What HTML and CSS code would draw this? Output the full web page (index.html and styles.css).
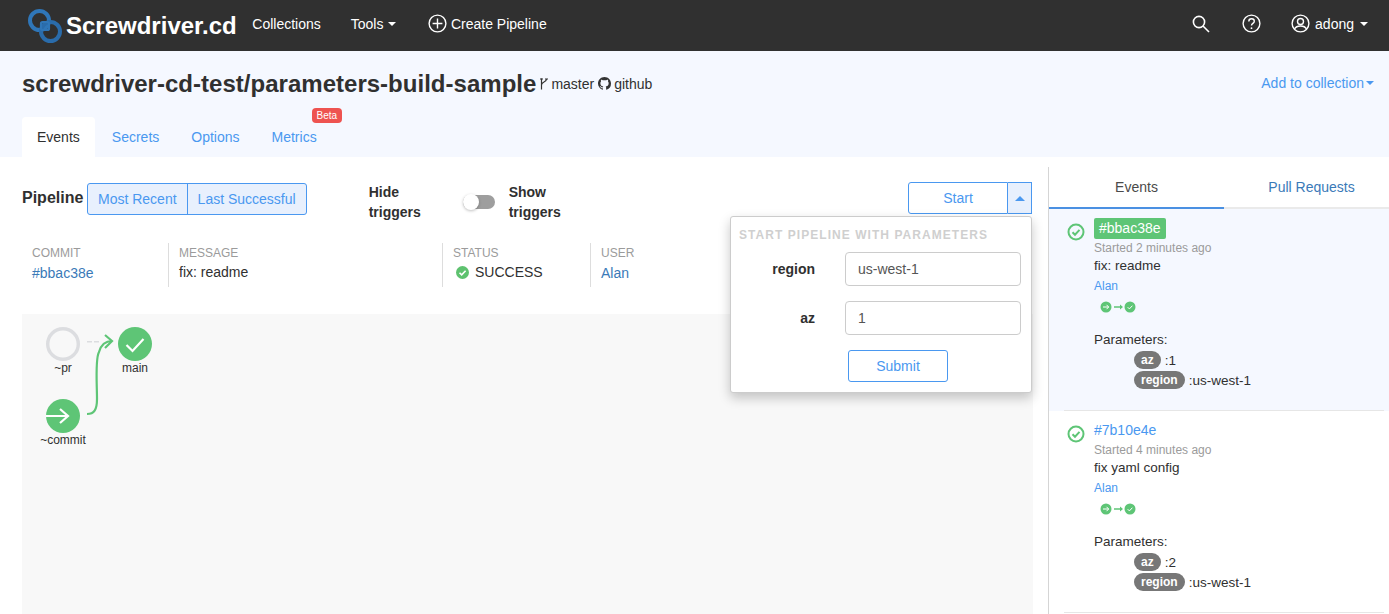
FILE: index.html
```html
<!DOCTYPE html>
<html lang="en">
<head>
<meta charset="utf-8">
<title>Screwdriver.cd</title>
<link rel="stylesheet" href="styles.css">
</head>
<body>
<header class="topbar">
  <a class="brand">
    <svg class="brand-logo" width="34" height="34" viewBox="0 0 34 34" fill="none">
      <circle cx="11.500" cy="11.500" r="9.500" stroke="#2f76b8" stroke-width="4"/>
      <circle cx="22.500" cy="22.500" r="9.500" stroke="#2a6cab" stroke-width="4"/>
      <rect x="13" y="13" width="8" height="8" rx="1.500" stroke="#2f76b8" stroke-width="2.200"/>
    </svg>
    <span class="brand-name">Screwdriver.cd</span>
  </a>
  <nav class="nav-main">
    <a class="nav-item">Collections</a>
    <a class="nav-item">Tools <i class="caret"></i></a>
    <a class="nav-item nav-create">
      <svg width="19" height="19" viewBox="0 0 19 19" fill="none" stroke="#fff" stroke-width="1.4"><circle cx="9.5" cy="9.5" r="8.4"/><path d="M9.5 4.6v9.8M4.6 9.5h9.8"/></svg>
      Create Pipeline
    </a>
  </nav>
  <nav class="nav-right">
    <svg class="nav-search" width="18" height="18" viewBox="0 0 18 18" fill="none" stroke="#fff" stroke-width="1.6"><circle cx="7" cy="7" r="5.6"/><path d="M11 11l6 6"/></svg>
    <svg class="nav-help" width="19" height="19" viewBox="0 0 19 19" fill="none" stroke="#fff" stroke-width="1.4"><circle cx="9.5" cy="9.5" r="8.4"/><path d="M6.8 7.4c0-1.6 1.2-2.6 2.8-2.6s2.7 1 2.7 2.4c0 2.200-2.800 2.200-2.800 4.400"/><circle cx="9.500" cy="14.200" r=".9" fill="#fff" stroke="none"/></svg>
    <a class="nav-item nav-user">
      <svg width="19" height="19" viewBox="0 0 19 19" fill="none" stroke="#fff" stroke-width="1.4"><circle cx="9.500" cy="9.500" r="8.400"/><circle cx="9.500" cy="7.500" r="3"/><path d="M3.600 15c1-2.300 3.200-3 5.900-3s4.900.7 5.900 3"/></svg>
      adong <i class="caret"></i>
    </a>
  </nav>
</header>

<section class="pipeline-head">
  <div class="title-row">
    <h1 class="pipeline-title">screwdriver-cd-test/parameters-build-sample</h1>
    <span class="repo-meta">
      <svg class="branch-icon" width="9" height="12" viewBox="0 0 9 12" fill="none" stroke="#333" stroke-width="1.200"><path d="M2.500 0.500v11M7.500 1c0 3.500-5 2.500-5 6"/><path d="M1 1h3M6 1h3"/></svg>
      <span>master</span>
      <svg class="git-icon" width="13" height="13" viewBox="0 0 16 16"><path fill="#333" d="M8 0C3.580 0 0 3.580 0 8c0 3.540 2.290 6.530 5.470 7.590.4.070.55-.17.55-.38 0-.19-.01-.82-.01-1.490-2.010.37-2.530-.49-2.690-.94-.09-.23-.48-.94-.82-1.130-.28-.15-.68-.52-.01-.53.63-.01 1.080.58 1.230.82.720 1.210 1.870.87 2.330.66.070-.52.280-.87.510-1.070-1.780-.2-3.640-.89-3.640-3.950 0-.87.310-1.590.820-2.150-.08-.2-.36-1.020.08-2.120 0 0 .67-.21 2.200.82.640-.18 1.320-.27 2-.27s1.360.09 2 .27c1.530-1.040 2.200-.82 2.200-.82.440 1.100.160 1.920.08 2.120.51.560.82 1.270.82 2.150 0 3.070-1.870 3.750-3.650 3.950.290.250.540.730.540 1.480 0 1.070-.01 1.930-.01 2.200 0 .210.150.460.550.380A8.010 8.010 0 0 0 16 8c0-4.420-3.580-8-8-8z"/></svg>
      <span>github</span>
    </span>
    <a class="add-collection">Add to collection<i class="caret caret-blue"></i></a>
  </div>
  <div class="tabs">
    <a class="tab tab-active">Events</a>
    <a class="tab">Secrets</a>
    <a class="tab">Options</a>
    <a class="tab tab-metrics">Metrics<span class="beta">Beta</span></a>
  </div>
</section>

<main class="content">
  <section class="left">
    <div class="controls">
      <strong class="pipeline-label">Pipeline</strong>
      <div class="btn-group">
        <a class="seg">Most Recent</a>
        <a class="seg">Last Successful</a>
      </div>
      <div class="toggle-block">
        <strong class="toggle-text">Hide<br>triggers</strong>
        <span class="toggle"><i class="toggle-knob"></i></span>
        <strong class="toggle-text">Show<br>triggers</strong>
      </div>
      <div class="start-group">
        <a class="start-btn">Start</a>
        <a class="start-arrow"><i class="caret-up"></i></a>
        <form class="popover">
          <h2 class="popover-title">START PIPELINE WITH PARAMETERS</h2>
          <label class="field"><span class="field-label">region</span><input class="field-input" value="us-west-1"></label>
          <label class="field"><span class="field-label">az</span><input class="field-input" value="1"></label>
          <div class="submit-row"><a class="submit-btn">Submit</a></div>
        </form>
      </div>
    </div>

    <div class="meta">
      <div class="meta-col col-commit"><span class="meta-head">COMMIT</span><a class="meta-link">#bbac38e</a></div>
      <div class="meta-col col-message"><span class="meta-head">MESSAGE</span><span class="meta-val">fix: readme</span></div>
      <div class="meta-col col-status"><span class="meta-head">STATUS</span>
        <span class="meta-val status-val">
          <svg width="13" height="13" viewBox="0 0 13 13"><circle cx="6.500" cy="6.500" r="6.500" fill="#5ec26f"/><path d="M3.500 6.700l2.200 2.200 3.900-4.200" fill="none" stroke="#fff" stroke-width="1.600"/></svg>
          SUCCESS
        </span>
      </div>
      <div class="meta-col col-user"><span class="meta-head">USER</span><a class="meta-link">Alan</a></div>
    </div>

    <div class="graph">
      <svg class="graph-svg" width="160" height="140" viewBox="0 0 160 140">
        <circle cx="41" cy="30" r="15.300" fill="none" stroke="#dcdde0" stroke-width="3.400"/>
        <path d="M65 27.700H77" stroke="#dcdde0" stroke-width="1.500" stroke-dasharray="5 2" fill="none"/>
        <path d="M65 100c7 0 10-4 10-15 0-15-2-40 2-47 2-7 7-11 13-11" fill="none" stroke="#5ec576" stroke-width="2.200"/>
        <path d="M83 21l7 6-7 7" fill="none" stroke="#5ec576" stroke-width="2.200"/>
        <circle cx="113" cy="30" r="17" fill="#5ec576"/>
        <path d="M104.500 31l6 6 11-12" fill="none" stroke="#fff" stroke-width="2.200"/>
        <circle cx="41" cy="102" r="17" fill="#5ec576"/>
        <path d="M24 102h22M38 95l8 7-8 7" fill="none" stroke="#fff" stroke-width="2.200"/>
        <text class="graph-label" x="41" y="58" text-anchor="middle">~pr</text>
        <text class="graph-label" x="113" y="58" text-anchor="middle">main</text>
        <text class="graph-label" x="41" y="130" text-anchor="middle">~commit</text>
      </svg>
    </div>
  </section>

  <aside class="side">
    <div class="side-tabs">
      <a class="side-tab side-tab-active">Events</a>
      <a class="side-tab">Pull Requests</a>
    </div>
    <article class="event event-active">
      <svg class="event-check" width="18" height="18" viewBox="0 0 18 18" fill="none"><circle cx="9" cy="9" r="7.500" stroke="#5ec576" stroke-width="2"/><path d="M5.500 9.200l2.500 2.500 4.500-4.800" stroke="#5ec576" stroke-width="2"/></svg>
      <div class="event-body">
        <a class="sha sha-active">#bbac38e</a>
        <div class="started">Started 2 minutes ago</div>
        <div class="msg">fix: readme</div>
        <a class="author">Alan</a>
        <svg class="mini-graph" width="38" height="12" viewBox="0 0 38 12"><circle cx="6" cy="6" r="5.500" fill="#5ec576"/><path d="M3 6h5.500M6.500 3.800L8.700 6 6.500 8.200" stroke="#fff" fill="none"/><path d="M14 6h8" stroke="#5ec576" stroke-width="1.500"/><path d="M20 3.500L23 6l-3 2.500z" fill="#5ec576"/><circle cx="30" cy="6" r="5.500" fill="#5ec576"/><path d="M27.700 6.200l1.700 1.700 3-3.200" stroke="#fff" fill="none"/></svg>
        <div class="params-title">Parameters:</div>
        <div class="param"><span class="pill">az</span><span class="param-val">:1</span></div>
        <div class="param"><span class="pill">region</span><span class="param-val">:us-west-1</span></div>
      </div>
    </article>
    <article class="event">
      <svg class="event-check" width="18" height="18" viewBox="0 0 18 18" fill="none"><circle cx="9" cy="9" r="7.500" stroke="#5ec576" stroke-width="2"/><path d="M5.500 9.200l2.500 2.500 4.500-4.800" stroke="#5ec576" stroke-width="2"/></svg>
      <div class="event-body">
        <a class="sha">#7b10e4e</a>
        <div class="started">Started 4 minutes ago</div>
        <div class="msg">fix yaml config</div>
        <a class="author">Alan</a>
        <svg class="mini-graph" width="38" height="12" viewBox="0 0 38 12"><circle cx="6" cy="6" r="5.500" fill="#5ec576"/><path d="M3 6h5.500M6.500 3.800L8.700 6 6.500 8.200" stroke="#fff" fill="none"/><path d="M14 6h8" stroke="#5ec576" stroke-width="1.500"/><path d="M20 3.500L23 6l-3 2.500z" fill="#5ec576"/><circle cx="30" cy="6" r="5.500" fill="#5ec576"/><path d="M27.700 6.200l1.700 1.700 3-3.200" stroke="#fff" fill="none"/></svg>
        <div class="params-title">Parameters:</div>
        <div class="param"><span class="pill">az</span><span class="param-val">:2</span></div>
        <div class="param"><span class="pill">region</span><span class="param-val">:us-west-1</span></div>
      </div>
    </article>
  </aside>
</main>
</body>
</html>
```
FILE: styles.css
```css
* { box-sizing: border-box; }
html, body { margin: 0; height: 100%; }
body {
  font-family: "Liberation Sans", Arial, sans-serif;
  font-size: 14px;
  color: #303030;
  background: #fff;
  overflow: hidden;
  height: 614px;
}
a { color: inherit; text-decoration: none; }

/* top bar */
.topbar {
  height: 51px;
  background: #303030;
  color: #fff;
  display: flex;
  align-items: center;
  padding: 0 21px 4px 28px;
}
.brand { display: flex; align-items: center; gap: 4px; margin-top: 4px; }
.brand-name { font-size: 24px; font-weight: 700; }
.nav-main { display: flex; align-items: center; margin-left: 15.5px; gap: 30px; }
.nav-item { display: flex; align-items: center; gap: 4px; white-space: nowrap; }
.nav-create { gap: 4px; margin-left: 1.5px; }
.caret {
  display: inline-block;
  width: 0; height: 0;
  margin-left: 1px;
  border: 4px solid transparent;
  border-top-color: #fff;
  border-bottom-width: 0;
}
.caret-blue { border-top-color: #4a98f0; margin-left: 2px; }
.nav-right { margin-left: auto; display: flex; align-items: center; }
.nav-search { margin-right: 32px; }
.nav-help { margin-right: 30px; }
.nav-user { gap: 5px; }

/* pipeline header */
.pipeline-head { height: 106px; background: #f5f8ff; padding: 0 15px 0 22px; display: flex; flex-direction: column; }
.title-row { display: flex; align-items: center; height: 66px; }
.pipeline-title { margin: 0; font-size: 24px; font-weight: 700; color: #303030; letter-spacing: .02px; }
.repo-meta { display: flex; align-items: center; gap: 3px; margin: -1px 0 0 3px; }
.git-icon { margin-left: 1px; }
.add-collection { margin-left: auto; color: #4a98f0; margin-top: -3px; display: flex; align-items: center; }
.tabs { display: flex; }
.tab { height: 40px; padding: 0 15px; margin-right: 2px; color: #4a98f0; line-height: 41px; border-radius: 4px 4px 0 0; }
.tab-active { background: #fff; color: #303030; }
.tab-metrics { position: relative; }
.beta {
  position: absolute;
  left: 55px; top: -9px;
  height: 15px; padding: 0 5px;
  background: #ee5350;
  color: #fff;
  font-size: 10px;
  line-height: 15px;
  border-radius: 4px;
}

/* main */
.content { display: flex; height: 457px; }
.left { width: 1048px; padding: 26px 15px 0 22px; display: flex; flex-direction: column; flex: none; }
.controls { display: flex; align-items: flex-start; height: 58px; }
.pipeline-label { font-size: 16px; margin-top: 6px; width: 65px; }
.btn-group { display: flex; height: 32px; border: 1px solid #4a98f0; border-radius: 3px; background: #e8f0fd; color: #4a98f0; }
.seg { padding: 0 10px; line-height: 31px; }
.seg + .seg { border-left: 1px solid #4a98f0; }
.toggle-block { display: flex; margin-left: 62px; align-items: center; height: 40px; margin-top: -1px; }
.toggle-text { line-height: 20px; width: 52px; display: block; }
.toggle { position: relative; width: 32px; height: 14px; background: #9e9e9e; border-radius: 7px; margin: 0 14px 0 42px; }
.toggle-knob {
  position: absolute;
  left: 0; top: -1px;
  width: 16px; height: 16px;
  background: #fff;
  border-radius: 50%;
  box-shadow: 0 1px 3px rgba(0,0,0,.25);
}
.start-group { position: relative; margin-left: auto; margin-right: 1px; display: flex; height: 32px; margin-top: -1px; }
.start-btn {
  width: 100px;
  border: 1px solid #4a98f0;
  border-radius: 3px 0 0 3px;
  color: #4a98f0;
  text-align: center;
  line-height: 30px;
}
.start-arrow {
  width: 24px;
  border: 1px solid #4a98f0;
  border-left: 0;
  background: #e8f0fd;
  display: flex; align-items: center; justify-content: center;
}
.caret-up { width: 0; height: 0; border: 5px solid transparent; border-bottom-color: #4a98f0; border-top-width: 0; }
.popover {
  position: absolute;
  z-index: 5;
  right: 0; top: 34px;
  width: 302px; height: 177px;
  background: #fff;
  border: 1px solid #ccc;
  border-radius: 3px;
  box-shadow: 0 5px 12px rgba(0,0,0,.22);
  padding: 12px 10px 0 8px;
}
.popover-title { margin: 0 0 10px; font-size: 12px; line-height: 13px; font-weight: 700; letter-spacing: 1.050px; color: #cfcfcf; white-space: nowrap; }
.field { display: flex; align-items: center; margin-bottom: 15px; }
.field-label { width: 76px; text-align: right; font-weight: 700; margin-right: 30px; }
.field-input {
  width: 176px; height: 34px;
  border: 1px solid #ccc;
  border-radius: 4px;
  padding: 0 12px;
  font: 14px "Liberation Sans", Arial, sans-serif;
  color: #555;
  background: #fff;
}
.submit-row { padding-left: 109px; }
.submit-btn { display: block; width: 100px; height: 32px; border: 1px solid #4a98f0; border-radius: 3px; color: #4a98f0; text-align: center; line-height: 30px; }

.meta { display: flex; height: 46px; margin-top: 2px; }
.meta-col { display: flex; flex-direction: column; padding-left: 10px; border-left: 1px solid #ddd; height: 44px; }
.meta-head { font-size: 12px; color: #9b9b9b; line-height: 14px; margin-top: 3px; }
.meta-val { line-height: 20px; margin-top: 2px; }
.meta-link { color: #3a7ab8; line-height: 22px; margin-top: 2px; }
.col-commit { width: 146px; border-left: 0; }
.col-message { width: 274px; }
.col-status { width: 148px; }
.col-user { width: 90px; }
.status-val { display: flex; align-items: center; gap: 6px; margin-left: 3px; }

.graph { flex: 1; background: #f8f8f8; margin-top: 25px; }
.graph-svg { display: block; }
.graph-label { font-family: "Liberation Sans", Arial, sans-serif; font-size: 12px; fill: #303030; }

/* sidebar */
.side { width: 341px; border-left: 1px solid #d5d5d5; margin-top: 10px; flex: none; }
.side-tabs { display: flex; height: 42px; border-bottom: 2px solid #eaeaea; }
.side-tab { flex: 0 0 175px; text-align: center; color: #3a7ab8; line-height: 41px; height: 42px; }
.side-tab-active { color: #4a4a4a; border-bottom: 2px solid #4a90e2; }
.event { display: flex; height: 202px; padding: 9px 0 0 18px; position: relative; }
.event::after { content: ""; position: absolute; left: 15px; right: 5px; bottom: 0; border-bottom: 1px solid #e6e6e6; }
.event-active { background: #f5f8ff; }
.event-check { margin: 4.500px 9px 0 0; flex: none; }
.event-body { display: flex; flex-direction: column; align-items: flex-start; }
.sha { color: #4a98f0; line-height: 21px; height: 21px; }
.sha-active { background: #5ec576; color: #fff; padding: 0 5px; border-radius: 2px; }
.started { font-size: 12px; color: #9b9b9b; line-height: 16px; margin-top: 1px; height: 16px; }
.msg { font-size: 13.500px; line-height: 20px; }
.author { font-size: 12px; color: #4a98f0; line-height: 18px; margin-top: 1px; }
.mini-graph { margin: 6px 0 0 6px; display: block; }
.params-title { line-height: 18px; font-size: 13.500px; margin-top: 18px; margin-bottom: 1px; }
.param { display: flex; align-items: center; margin-left: 40px; height: 20px; font-size: 13.500px; }
.pill { background: #777; color: #fff; font-size: 12px; font-weight: 700; border-radius: 9px; padding: 0 7px; line-height: 18px; margin-right: 4px; }
```
